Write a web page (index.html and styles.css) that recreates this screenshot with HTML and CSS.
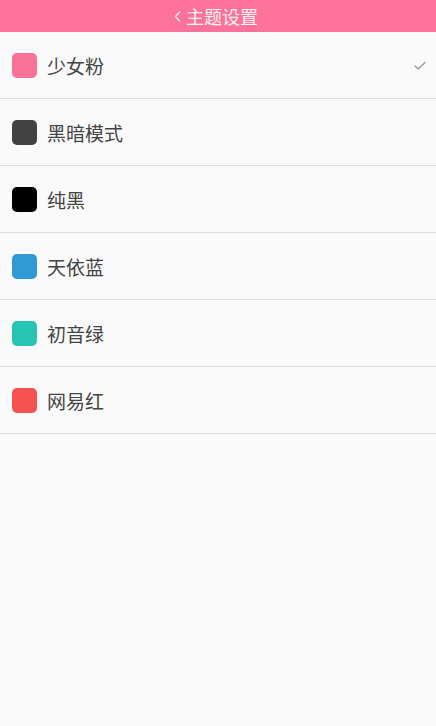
FILE: index.html
```html
<!DOCTYPE html>
<html>
<head>
<meta charset="utf-8">
<link rel="stylesheet" href="styles.css">
</head>
<body>
<div class="app">
  <header class="bar">
    <span class="back">
      <svg width="7" height="11" viewBox="0 0 7 11"><path d="M5.5 1 L1.5 5.5 L5.5 10" fill="none" stroke="#fff" stroke-width="1.3" stroke-linecap="round" stroke-linejoin="round" opacity="0.9"/></svg>
    </span>
    <span class="title">主题设置</span>
  </header>
  <ul class="list">
    <li class="row"><span class="sw pink"></span><span class="name">少女粉</span>
      <svg class="check" width="12" height="9" viewBox="0 0 12 9"><path d="M1 5 L4.2 8 L11 1.5" fill="none" stroke="#9a9a9a" stroke-width="1.4" stroke-linecap="round" stroke-linejoin="round"/></svg>
    </li>
    <li class="row"><span class="sw dark"></span><span class="name">黑暗模式</span></li>
    <li class="row"><span class="sw black"></span><span class="name">纯黑</span></li>
    <li class="row"><span class="sw blue"></span><span class="name">天依蓝</span></li>
    <li class="row"><span class="sw teal"></span><span class="name">初音绿</span></li>
    <li class="row"><span class="sw red"></span><span class="name">网易红</span></li>
  </ul>
</div>
</body>
</html>
```
FILE: styles.css
```css
html, body {
  margin: 0;
  padding: 0;
  background: #fafafa;
  font-family: Roboto, "Noto Sans CJK SC", "Noto Sans", sans-serif;
}
.app {
  width: 436px;
  min-height: 726px;
  background: #fafafa;
}
.bar {
  height: 32px;
  background: #fc7298;
  display: flex;
  align-items: center;
  justify-content: center;
  gap: 5px;
  color: #fff;
  padding-right: 4px;
}
.back {
  display: flex;
  align-items: center;
  padding-top: 1px;
}
.title {
  font-size: 18px;
  color: #fff3f6;
}
.list {
  list-style: none;
  margin: 0;
  padding: 0;
}
.row {
  height: 66px;
  border-bottom: 1px solid #dcdcdc;
  display: flex;
  align-items: center;
  padding-left: 12px;
  padding-right: 10px;
}
.sw {
  width: 25px;
  height: 25px;
  border-radius: 5px;
  flex: none;
}
.pink { background: #fb7299; }
.dark { background: #424242; }
.black { background: #000; }
.blue { background: #319ad6; }
.teal { background: #27c4b4; }
.red { background: #f75252; }
.name {
  margin-left: 10px;
  font-size: 19px;
  color: #444;
}
.check {
  margin-left: auto;
}
```
